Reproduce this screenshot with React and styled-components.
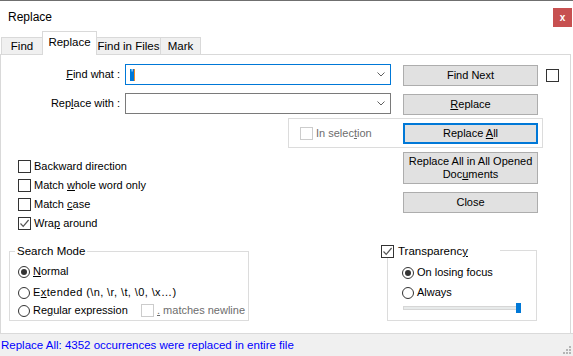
import React from "react";
import styled, { createGlobalStyle } from "styled-components";

const GlobalStyle = createGlobalStyle`
  html, body { margin: 0; padding: 0; background: #fff; }
  body {
    font-family: "Liberation Sans", Arial, sans-serif;
    font-size: 11px;
    color: #000;
  }
  * { box-sizing: border-box; }
`;

const Dialog = styled.div`
  width: 573px;
  height: 356px;
  display: flex;
  flex-direction: column;
  background: #fff;
  overflow: hidden;
`;

const TitleBar = styled.div`
  height: 31px;
  flex: none;
  border-top: 1px solid #6f6f6f;
  display: flex;
  align-items: flex-start;
  padding-left: 8px;
`;

const Title = styled.div`
  font-size: 12px;
  line-height: 14px;
  margin-top: 9px;
`;

const CloseBtn = styled.div`
  margin-left: auto;
  margin-right: 1px;
  margin-top: 7px;
  width: 19px;
  height: 19px;
  background: #c75050;
  color: #fff;
  font-weight: bold;
  font-size: 10px;
  line-height: 10px;
  display: flex;
  align-items: center;
  justify-content: center;
`;

const TabStrip = styled.div`
  height: 23px;
  flex: none;
  display: flex;
  align-items: flex-end;
  padding-left: 1px;
`;

const Tab = styled.div`
  position: relative;
  z-index: ${(p) => (p.$active ? 1 : 0)};
  width: ${(p) => p.$w}px;
  height: ${(p) => (p.$active ? 24 : 17)}px;
  margin-bottom: ${(p) => (p.$active ? -1 : 0)}px;
  padding-top: ${(p) => (p.$active ? 4 : 2)}px;
  background: ${(p) => (p.$active ? "#fff" : "#f0f0f0")};
  border: 1px solid #d9d9d9;
  border-bottom: none;
  margin-left: ${(p) => (p.$first ? 0 : -1)}px;
  font-size: 11.5px;
  line-height: 13px;
  text-align: center;
  white-space: nowrap;
`;

const Panel = styled.div`
  flex: 1;
  margin-right: 2px;
  border: 1px solid #d9d9d9;
  border-bottom: none;
  display: flex;
  flex-direction: column;
`;

const FieldRow = styled.div`
  display: flex;
  align-items: flex-start;
  height: 22px;
  margin-top: ${(p) => p.$top}px;
`;

const FieldLabel = styled.div`
  width: 124px;
  padding-right: 5px;
  text-align: right;
  line-height: 21px;
`;

const Combo = styled.div`
  width: 266px;
  height: 21px;
  border: 1px solid ${(p) => (p.$focus ? "#0078d7" : "#7a7a7a")};
  display: flex;
  align-items: center;
  padding: 0 5px 0 4px;
`;

const Selected = styled.span`
  display: inline-block;
  height: 12px;
  width: 5px;
  background: #0078d7;
  color: #fff;
  border-right: 1px solid #f08a24;
  font-size: 10px;
  line-height: 10px;
  text-align: center;
`;

const Chevron = styled.svg`
  margin-left: auto;
  flex: none;
`;

const Button = styled.div`
  width: 135px;
  height: ${(p) => p.$h || 21}px;
  margin-top: ${(p) => p.$top || 0}px;
  margin-left: ${(p) => p.$left || 0}px;
  background: #e1e1e1;
  border: ${(p) => (p.$focus ? "2px solid #0078d7" : "1px solid #adadad")};
  display: flex;
  align-items: center;
  justify-content: center;
  line-height: 13px;
  font-size: 11px;
  flex: none;
`;

const ButtonText = styled.span`
  text-align: center;
`;

const Box = styled.span`
  width: 13px;
  height: 13px;
  flex: none;
  border: 1px solid ${(p) => (p.$disabled ? "#cccccc" : "#333333")};
  background: #fff;
  display: inline-flex;
  align-items: center;
  justify-content: center;
  margin-top: ${(p) => p.$top || 0}px;
  margin-left: ${(p) => p.$left || 0}px;
`;

const Round = styled.span`
  width: 12px;
  height: 12px;
  flex: none;
  border: 1px solid #333;
  border-radius: 50%;
  background: #fff;
  display: inline-flex;
  align-items: center;
  justify-content: center;
  &::after {
    content: "";
    display: ${(p) => (p.$on ? "block" : "none")};
    width: 6px;
    height: 6px;
    border-radius: 50%;
    background: #333;
  }
`;

const Key = styled.span`
  text-decoration: underline;
  text-underline-offset: 1px;
`;

const SelectionGroup = styled.div`
  margin-top: 3px;
  margin-left: 287px;
  width: 255px;
  height: 30px;
  border: 1px solid #dcdcdc;
  display: flex;
  align-items: flex-start;
  padding: 3px 3px 0 11px;
`;

const Option = styled.div`
  display: flex;
  align-items: center;
  height: 13px;
  line-height: 13px;
  color: ${(p) => (p.$disabled ? "#6d6d6d" : "#000")};
  margin-top: ${(p) => p.$top || 0}px;
  margin-left: ${(p) => p.$left || 0}px;
  gap: 3px;
  white-space: nowrap;
`;

const OptText = styled.span`
  width: ${(p) => (p.$w ? `${p.$w}px` : "auto")};
  letter-spacing: ${(p) => p.$ls || 0}px;
  flex: none;
`;

const Middle = styled.div`
  display: flex;
  height: 97px;
`;

const CheckList = styled.div`
  width: 385px;
  margin-left: 17px;
  padding-top: 12px;
  display: flex;
  flex-direction: column;
  gap: 6px;
`;

const ButtonColumn = styled.div`
  width: 135px;
  padding-top: 4px;
  display: flex;
  flex-direction: column;
  gap: 8px;
`;

const Bottom = styled.div`
  display: flex;
  align-items: flex-start;
`;

const Group = styled.div`
  width: ${(p) => p.$w}px;
  height: ${(p) => p.$h}px;
  margin-top: ${(p) => p.$top}px;
  margin-left: ${(p) => p.$left}px;
  border: 1px solid #dcdcdc;
  display: flex;
  flex-direction: column;
  padding-left: ${(p) => p.$pad}px;
`;

const Legend = styled.div`
  display: flex;
  align-items: center;
  gap: 4px;
  height: 13px;
  line-height: 13px;
  background: #fff;
  width: ${(p) => (p.$w ? `${p.$w}px` : "fit-content")};
  margin-top: ${(p) => p.$top}px;
  margin-left: ${(p) => p.$left}px;
  padding: 0 2px;
  font-size: 11.5px;
`;

const Track = styled.div`
  margin-top: 7px;
  margin-left: 1px;
  width: 118px;
  height: 4px;
  background: #e7eaea;
  border: 1px solid #d6d6d6;
  display: flex;
  align-items: center;
  justify-content: flex-end;
`;

const Thumb = styled.div`
  width: 5px;
  height: 10px;
  flex: none;
  background: #0078d7;
  margin-right: -1px;
`;

const StatusBar = styled.div`
  height: 23px;
  flex: none;
  background: #f0f0f0;
  border-top: 1px solid #dadada;
  display: flex;
  align-items: center;
  padding-left: 1px;
  color: #0000ff;
  font-size: 11.5px;
`;

const Grip = styled.svg`
  margin-left: auto;
  align-self: flex-end;
  margin-bottom: 2px;
  margin-right: 2px;
`;

const Check = () => (
  <svg width="11" height="11" viewBox="0 0 11 11">
    <path d="M1.5 5.5 L4.2 8.3 L9.6 2" fill="none" stroke="#555" strokeWidth="1.2" />
  </svg>
);

const ChevronIcon = () => (
  <Chevron width="8" height="5" viewBox="0 0 8 5">
    <path d="M0.5 0.5 L4 4 L7.5 0.5" fill="none" stroke="#606060" strokeWidth="1" />
  </Chevron>
);

const CheckOption = ({ checked, children, disabled, top, left, w }) => (
  <Option $disabled={disabled} $top={top} $left={left}>
    <Box $disabled={disabled}>{checked && <Check />}</Box>
    <OptText $w={w}>{children}</OptText>
  </Option>
);

const RadioOption = ({ on, children, top, w, ls, extra }) => (
  <Option $top={top}>
    <Round $on={on} />
    <OptText $w={w} $ls={ls}>{children}</OptText>
    {extra}
  </Option>
);

export default function App() {
  return (
    <Dialog>
      <GlobalStyle />
      <TitleBar>
        <Title>Replace</Title>
        <CloseBtn>x</CloseBtn>
      </TitleBar>

      <TabStrip>
        <Tab $first $w={42}>Find</Tab>
        <Tab $active $w={55}>Replace</Tab>
        <Tab $w={65}>Find in Files</Tab>
        <Tab $w={41}>Mark</Tab>
      </TabStrip>

      <Panel>
        <FieldRow $top={9}>
          <FieldLabel><Key>F</Key>ind what :</FieldLabel>
          <Combo $focus>
            <Selected>'</Selected>
            <ChevronIcon />
          </Combo>
          <Button $left={12} $top={1}><ButtonText>Find Next</ButtonText></Button>
          <Box $left={8} $top={5} />
        </FieldRow>

        <FieldRow $top={7}>
          <FieldLabel>Rep<Key>l</Key>ace with :</FieldLabel>
          <Combo>
            <ChevronIcon />
          </Combo>
          <Button $left={12} $top={1}><ButtonText><Key>R</Key>eplace</ButtonText></Button>
        </FieldRow>

        <SelectionGroup>
          <CheckOption disabled top={5} w={86}>In selec<Key>t</Key>ion</CheckOption>
          <Button $focus $left={1} $top={1}>
            <ButtonText>Replace <Key>A</Key>ll</ButtonText>
          </Button>
        </SelectionGroup>

        <Middle>
          <CheckList>
            <CheckOption>Backward direction</CheckOption>
            <CheckOption>Match <Key>w</Key>hole word only</CheckOption>
            <CheckOption>Match <Key>c</Key>ase</CheckOption>
            <CheckOption checked>Wra<Key>p</Key> around</CheckOption>
          </CheckList>
          <ButtonColumn>
            <Button $h={32}>
              <ButtonText>
                Replace All in All Opened<br />Doc<Key>u</Key>ments
              </ButtonText>
            </Button>
            <Button><ButtonText>Close</ButtonText></Button>
          </ButtonColumn>
        </Middle>

        <Bottom>
          <Group $w={240} $h={70} $top={6} $left={8} $pad={8}>
            <Legend $top={-7} $left={-3}>Search Mode</Legend>
            <RadioOption on top={7}><Key>N</Key>ormal</RadioOption>
            <RadioOption top={8} ls={0.4}>E<Key>x</Key>tended (\n, \r, \t, \0, \x…)</RadioOption>
            <RadioOption
              top={5}
              w={105}
              extra={
                <CheckOption disabled>
                  <Key>.</Key> matches newline
                </CheckOption>
              }
            >
              Re<Key>g</Key>ular expression
            </RadioOption>
          </Group>

          <Group $w={150} $h={71} $top={5} $left={138} $pad={14}>
            <Legend $top={-6} $left={-23} $w={121}>
              <Box><Check /></Box>
              <span>Transparenc<Key>y</Key></span>
            </Legend>
            <RadioOption on top={8}>On losing focus</RadioOption>
            <RadioOption top={7}>Always</RadioOption>
            <Track>
              <Thumb />
            </Track>
          </Group>
        </Bottom>
      </Panel>

      <StatusBar>
        Replace All: 4352 occurrences were replaced in entire file
        <Grip width="9" height="9" viewBox="0 0 9 9">
          <g fill="#b5b5b5">
            <rect x="7" y="1" width="2" height="2" />
            <rect x="4" y="4" width="2" height="2" />
            <rect x="7" y="4" width="2" height="2" />
            <rect x="1" y="7" width="2" height="2" />
            <rect x="4" y="7" width="2" height="2" />
            <rect x="7" y="7" width="2" height="2" />
          </g>
        </Grip>
      </StatusBar>
    </Dialog>
  );
}
